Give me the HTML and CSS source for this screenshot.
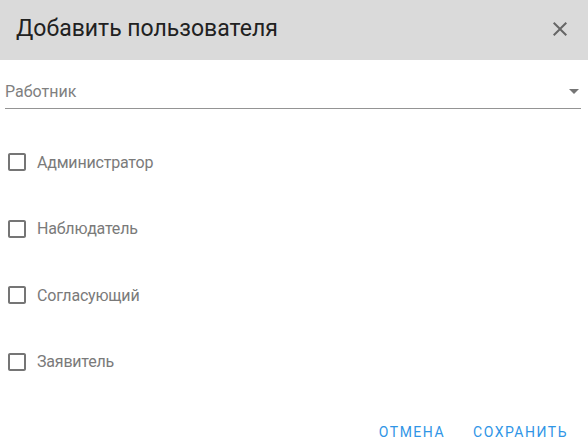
FILE: index.html
```html
<!DOCTYPE html>
<html lang="ru">
<head>
<meta charset="utf-8">
<link rel="stylesheet" href="styles.css">
</head>
<body>
<div class="dialog">
  <div class="header">
    <h2 class="title">Добавить пользователя</h2>
    <button class="close" aria-label="close">
      <svg width="24" height="24" viewBox="0 0 24 24"><path d="M19 6.41L17.59 5 12 10.59 6.41 5 5 6.41 10.59 12 5 17.59 6.41 19 12 13.41 17.59 19 19 17.59 13.41 12z" fill="#666"/></svg>
    </button>
  </div>
  <div class="content">
    <div class="select">
      <span class="placeholder">Работник</span>
      <svg class="arrow" width="24" height="24" viewBox="0 0 24 24"><path d="M7 10l5 5 5-5z" fill="#757575"/></svg>
    </div>
    <div class="checks">
      <label class="check"><svg width="24" height="24" viewBox="0 0 24 24"><path d="M19 5v14H5V5h14m0-2H5c-1.1 0-2 .9-2 2v14c0 1.1.9 2 2 2h14c1.1 0 2-.9 2-2V5c0-1.1-.9-2-2-2z" fill="#757575"/></svg><span>Администратор</span></label>
      <label class="check"><svg width="24" height="24" viewBox="0 0 24 24"><path d="M19 5v14H5V5h14m0-2H5c-1.1 0-2 .9-2 2v14c0 1.1.9 2 2 2h14c1.1 0 2-.9 2-2V5c0-1.1-.9-2-2-2z" fill="#757575"/></svg><span>Наблюдатель</span></label>
      <label class="check"><svg width="24" height="24" viewBox="0 0 24 24"><path d="M19 5v14H5V5h14m0-2H5c-1.1 0-2 .9-2 2v14c0 1.1.9 2 2 2h14c1.1 0 2-.9 2-2V5c0-1.1-.9-2-2-2z" fill="#757575"/></svg><span>Согласующий</span></label>
      <label class="check"><svg width="24" height="24" viewBox="0 0 24 24"><path d="M19 5v14H5V5h14m0-2H5c-1.1 0-2 .9-2 2v14c0 1.1.9 2 2 2h14c1.1 0 2-.9 2-2V5c0-1.1-.9-2-2-2z" fill="#757575"/></svg><span>Заявитель</span></label>
    </div>
  </div>
  <div class="actions">
    <button class="btn">Отмена</button>
    <button class="btn">Сохранить</button>
  </div>
</div>
</body>
</html>
```
FILE: styles.css
```css
* { box-sizing: border-box; }
html, body { margin: 0; padding: 0; background: #fff; }
body { font-family: Roboto, "Noto Sans", sans-serif; width: 588px; height: 447px; overflow: hidden; }
.dialog { display: flex; flex-direction: column; height: 447px; }
.header {
  height: 60px;
  background: #dadada;
  display: flex;
  align-items: center;
  justify-content: space-between;
  padding: 0 8px 0 16px;
}
.title { margin: -3px 0 0; font-size: 23px; font-weight: 400; color: #212121; }
.close { border: 0; background: none; padding: 0; width: 24px; height: 24px; display: flex; margin-right: 8px; margin-top: -3px; }
.content { padding: 0 7px 0 5px; }
.select {
  margin-top: 19px;
  height: 30px;
  border-bottom: 1px solid #949494;
  display: flex;
  align-items: center;
  justify-content: space-between;
}
.placeholder { font-size: 16px; color: #808080; margin-top: -5px; }
.arrow { margin-right: -5px; margin-top: -5px; }
.checks { display: flex; flex-direction: column; gap: 42.5px; margin-top: 41px; }
.check { display: flex; align-items: center; gap: 8px; height: 24px; font-size: 16px; color: #7a7a7a; letter-spacing: -0.2px; }
.check svg { flex: none; }
.actions { margin-top: auto; display: flex; justify-content: flex-end; gap: 20px; padding: 0 16px 3px 0; }
.btn {
  border: 0; background: none; padding: 0 4px; height: 24px;
  font-family: Roboto, sans-serif; font-size: 14px; text-transform: uppercase;
  letter-spacing: 1.5px; color: #2f95e6;
}
```
